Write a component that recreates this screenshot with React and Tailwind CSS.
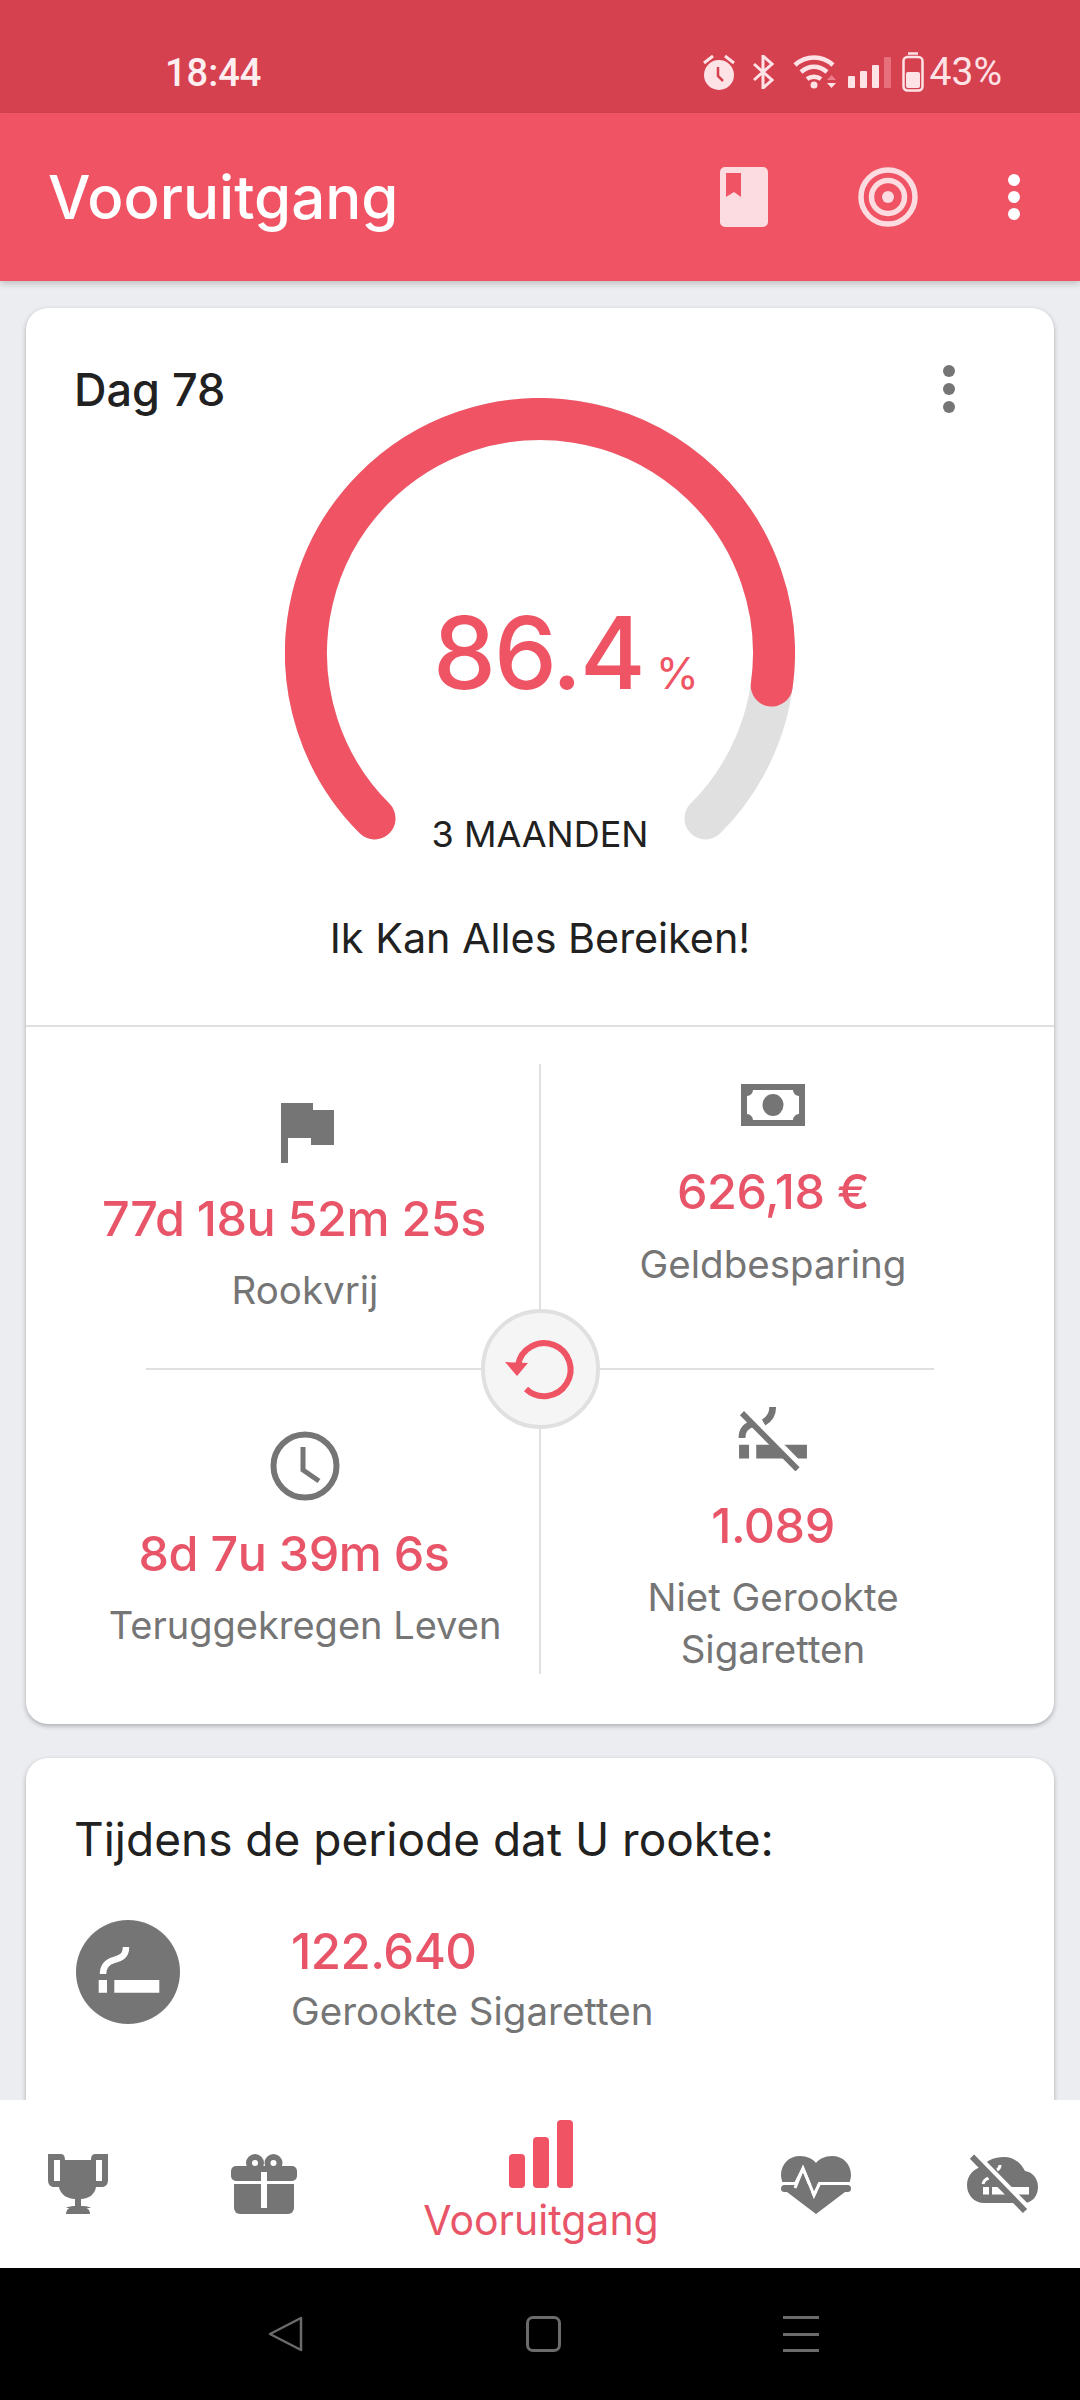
import React from "react";

const polar = (deg, r = 234, cx = 255, cy = 255) => {
  const a = (deg * Math.PI) / 180;
  return [cx + r * Math.sin(a), cy - r * Math.cos(a)];
};
const arc = (from, to) => {
  const [x1, y1] = polar(from);
  const [x2, y2] = polar(to);
  return `M${x1} ${y1}A234 234 0 ${to - from > 180 ? 1 : 0} 1 ${x2} ${y2}`;
};

const Gauge = () => (
  <svg width="510" height="460" viewBox="0 0 510 460" fill="none" strokeWidth="42" strokeLinecap="round">
    <path d={arc(-135, 135)} stroke="#e0e0e0" />
    <path d={arc(-135, 98)} stroke="#f05464" />
  </svg>
);

const Dots = ({ color, gap }) => (
  <div className={`flex flex-col ${gap}`}>
    <span className={`w-[12px] h-[12px] rounded-full ${color}`} />
    <span className={`w-[12px] h-[12px] rounded-full ${color}`} />
    <span className={`w-[12px] h-[12px] rounded-full ${color}`} />
  </div>
);

const StatusBar = () => (
  <div className="h-[113px] bg-[#d64150] flex items-start text-[#fde2e6] shrink-0 relative font-['Roboto',sans-serif]">
    <span className="ml-[165px] mt-[51px] text-[38px] leading-[44px] font-medium text-[#fdeef0]">18:44</span>
    <div className="ml-auto mr-[78px] mt-[50px] flex items-center h-[44px]">
      <svg width="32" height="36" viewBox="0 0 32 36" fill="#fde2e6">
        <path d="M1 9l9-7M31 9l-9-7" stroke="#fde2e6" strokeWidth="3" />
        <circle cx="16" cy="21" r="15" />
        <path d="M15 13v9l5 5" fill="none" stroke="#d64150" strokeWidth="2.500" />
      </svg>
      <svg width="21" height="34" viewBox="0 0 21 34" className="ml-[18px]" fill="none" stroke="#fde2e6" strokeWidth="3">
        <path d="M1 9l18 16-9 8V1l9 8L1 25" />
      </svg>
      <svg width="46" height="34" viewBox="0 0 46 34" className="ml-[19px]" fill="none" stroke="#fde2e6" strokeWidth="4.500">
        <path d="M2 10C13 0 29 0 40 10" />
        <path d="M8 17C16 10 26 10 34 17" />
        <path d="M14 24C18 21 24 21 28 24" />
        <circle cx="21" cy="30" r="3.500" fill="#fde2e6" stroke="none" />
        <path d="M34 25h9l-4.500-5z" fill="#ec7d89" stroke="none" />
        <path d="M34 28h9l-4.500 5z" fill="#fde2e6" stroke="none" />
      </svg>
      <svg width="44" height="31" viewBox="0 0 44 31" className="ml-[9px]" fill="#fde2e6">
        <rect x="0" y="19" width="7" height="12" rx="1" />
        <rect x="12" y="14" width="7" height="17" rx="1" />
        <rect x="24" y="8" width="7" height="23" rx="1" />
        <rect x="36" y="0" width="7" height="31" rx="1" fill="#e8707d" />
      </svg>
      <svg width="22" height="40" viewBox="0 0 22 40" className="ml-[10px]" fill="none" stroke="#fde2e6" strokeWidth="2.500">
        <path d="M6 1.500h10" />
        <rect x="1.500" y="5" width="19" height="33.500" rx="4" />
        <rect x="4" y="20" width="14" height="16" rx="2" fill="#fde2e6" stroke="none" />
      </svg>
      <span className="ml-[6px] text-[39px] leading-[44px]">43%</span>
    </div>
  </div>
);

const AppBar = () => (
  <div className="relative z-10 h-[168px] bg-[#f05464] flex items-center shrink-0 shadow-[0_3px_6px_rgba(0,0,0,0.18)]">
    <h1 className="ml-[48px] text-[60px] leading-[72px] text-white font-medium">Vooruitgang</h1>
    <svg width="48" height="60" viewBox="0 0 48 60" className="ml-auto">
      <path
        fillRule="evenodd"
        fill="#fcdce0"
        d="M5 0h38a5 5 0 0 1 5 5v50a5 5 0 0 1-5 5H5a5 5 0 0 1-5-5V5a5 5 0 0 1 5-5zM6 6v24l8-5 7 5V6z"
      />
    </svg>
    <svg width="60" height="60" viewBox="0 0 60 60" className="ml-[90px]" fill="none" stroke="#fcdce0" strokeWidth="5.500">
      <circle cx="30" cy="30" r="27" />
      <circle cx="30" cy="30" r="16.500" />
      <circle cx="30" cy="30" r="6" fill="#fcdce0" stroke="none" />
    </svg>
    <div className="ml-[90px] mr-[60px]">
      <Dots color="bg-white" gap="gap-[5px]" />
    </div>
  </div>
);

const GRAY = "#757575";

const Flag = () => (
  <svg width="53" height="60" viewBox="0 0 53 60" fill={GRAY} className="ml-[5px]">
    <path d="M0 0h32v7h21v35H30v-7H7v25H0z" />
  </svg>
);

const Money = () => (
  <svg width="64" height="42" viewBox="0 0 64 42">
    <path
      fillRule="evenodd"
      fill={GRAY}
      d="M0 0h64v42H0zM12 6c0 3-3 6-6 6v18c3 0 6 3 6 6h40c0-3 3-6 6-6V12c-3 0-6-3-6-6z"
    />
    <ellipse cx="32" cy="21" rx="10.500" ry="11" fill={GRAY} />
  </svg>
);

const Clock = () => (
  <svg width="70" height="70" viewBox="0 0 70 70" fill="none" stroke={GRAY} strokeWidth="6">
    <circle cx="35" cy="35" r="31.500" />
    <path d="M33 16v23l16 11" strokeWidth="5" />
  </svg>
);

// Crossed-out cigarette with a curl of smoke; the white edge runs along the slash's upper side
const NoSmoking = () => (
  <svg width="70" height="66" viewBox="0 0 70 66" fill="none">
    <path d="M34.700 0c0 8-4 13-9.400 16" stroke={GRAY} strokeWidth="7" />
    <path d="M15 17c-8 2-12 7-12 15" stroke={GRAY} strokeWidth="7" />
    <path d="M0 39h10.300v14H0zM17.700 39H70v14H17.700z" fill={GRAY} />
    <path d="M6 3.300l57.300 58" stroke="white" strokeWidth="8" />
    <path d="M3 6.300l57.300 58" stroke={GRAY} strokeWidth="6" />
  </svg>
);

const Cigarette = () => (
  <svg width="104" height="104" viewBox="0 0 104 104" fill="white">
    <path d="M22.700 60H31v12.700h-8.300zM38.300 60h45v12.700h-45z" />
    <path d="M50 27C50 36 45 38 38 40 31 42 27 46 27 54" fill="none" stroke="white" strokeWidth="6.500" />
  </svg>
);

const Trophy = () => (
  <svg width="60" height="60" viewBox="0 0 60 60" className="ml-[48px] mt-[54px]" fill={GRAY}>
    <path
      fillRule="evenodd"
      d="M0 0h13c3 0 4 3 4 6h26c0-3 1-6 4-6h13v26c0 5-3 7-6 7h-6c-1 7-7 12-15 12v7c6 0 9 1 10 2v0H18c1-1 4-2 9-2v-7c-8 0-15-5-16-12H6c-3 0-6-2-6-7zM6 6v21h6V6zM48 6v21h6V6z"
    />
    <path d="M18 60c0-5 4-8 12-8s12 3 12 8z" />
  </svg>
);

const Gift = () => (
  <svg width="66" height="60" viewBox="0 0 66 60" className="ml-[123px] mt-[54px]" fill={GRAY}>
    <circle cx="24" cy="9" r="9" />
    <circle cx="42.500" cy="9" r="9" />
    <circle cx="24" cy="9" r="3" fill="white" />
    <circle cx="42.500" cy="9" r="3" fill="white" />
    <rect x="0" y="12" width="66" height="15" rx="5" />
    <path d="M3 30h60v24a6 6 0 0 1-6 6H9a6 6 0 0 1-6-6z" />
    <rect x="30" y="18" width="6" height="36" fill="white" />
  </svg>
);

const Pulse = () => (
  <svg width="70" height="60" viewBox="0 0 70 60" className="ml-[124px] mt-[54px]">
    <path
      fill={GRAY}
      d="M19 2c7 0 13 3 16 7 3-4 9-7 16-7 11 0 19 8 19 19 0 3-1 6-2 9l-4 8-29 22L6 38l-4-8C1 27 0 24 0 21 0 10 8 2 19 2z"
    />
    <path d="M0 29.500h14.500L22 14.500 33 41l5.500-11.500H70" fill="none" stroke="white" strokeWidth="3" />
    <rect x="0" y="31" width="70" height="7" rx="3.500" fill={GRAY} />
    <path d="M14 34l8-19.500 11 26.500 5.500-11.500" fill="none" stroke="white" strokeWidth="3" />
  </svg>
);

const CloudOff = () => (
  <svg width="71" height="60" viewBox="0 0 71 60" className="ml-[116px] mt-[54px]">
    <path
      fill={GRAY}
      d="M37 3C47 3 54 9 58 17 66 18 71 25 71 33 71 42 65 49 57 49H17C7 49 0 41 0 31 0 22 6 15 14 13 19 7 27 3 37 3z"
    />
    <path d="M16 33h6v7.500h-6zM25 33h37v7.500H25z" fill="white" />
    <path d="M21.700 24c-3 1-5 3-5.700 6M33 11c0 2-1 4-3 5" fill="none" stroke="white" strokeWidth="3" />
    <path d="M8 0l53 54" stroke="white" strokeWidth="6" />
    <path d="M5 2.700l53 54.300" stroke={GRAY} strokeWidth="6" />
  </svg>
);

const valueClass = "text-[48.500px] leading-[56px] text-[#e85568] font-medium whitespace-nowrap tracking-[-0.5px]";
const labelClass = "text-[38.500px] leading-[52px] text-[#757575] text-center whitespace-nowrap";

const Stats = () => (
  <div className="relative px-[44px] pt-[38px]">
    <div className="grid grid-cols-[470px_470px] grid-rows-[303px_307px]">
      <div className="flex flex-col items-center pt-[38px]">
        <Flag />
        <div className={`${valueClass} mt-[28px] pr-[22px]`}>77d 18u 52m 25s</div>
        <div className={`${labelClass} mt-[17px]`}>Rookvrij</div>
      </div>
      <div className="flex flex-col items-center pt-[19px] pr-[4px]">
        <Money />
        <div className={`${valueClass} mt-[38px]`}>626,18 €</div>
        <div className={`${labelClass} mt-[18px]`}>Geldbesparing</div>
      </div>
      <div className="flex flex-col items-center pt-[63px]">
        <Clock />
        <div className={`${valueClass} mt-[25px] pr-[22px]`}>8d 7u 39m 6s</div>
        <div className="text-[38px] leading-[52px] text-[#757575] text-center whitespace-nowrap mt-[17px]">Teruggekregen Leven</div>
      </div>
      <div className="flex flex-col items-center pt-[39px] pr-[4px]">
        <NoSmoking />
        <div className={`${valueClass} mt-[27px]`}>1.089</div>
        <div className={`${labelClass} mt-[17px]`}>
          Niet Gerookte
          <br />
          Sigaretten
        </div>
      </div>
    </div>
    {/* Cross lines and the reset button sit over the four stat cells */}
    <div className="absolute left-[513px] top-[37px] w-[2px] h-[610px] bg-[#e0e0e0]" />
    <div className="absolute left-[120px] top-[341px] w-[788px] h-[2px] bg-[#e0e0e0]" />
    <div className="absolute left-[455px] top-[282px] w-[119px] h-[120px] rounded-full bg-[#f5f5f5] border-[4px] border-[#e0e0e0] flex items-center justify-center">
      <svg width="72" height="64" viewBox="0 0 72 64" fill="none">
        <path d="M13 28A26.500 26.500 0 1 1 21 52" stroke="#ef5465" strokeWidth="6" />
        <path d="M0 25l23 1-11 13z" fill="#ef5465" />
      </svg>
    </div>
  </div>
);

const BottomNav = () => (
  <nav className="relative z-10 h-[168px] bg-white shrink-0 flex items-start">
    <Trophy />
    <Gift />
    <div className="ml-[126px] w-[236px] -mr-[2px] flex flex-col items-center pt-[20px]">
      <svg width="64" height="68" viewBox="0 0 64 68" fill="#f05464">
        <rect x="0" y="34" width="16" height="34" rx="4" />
        <rect x="24" y="17" width="16" height="51" rx="4" />
        <rect x="48" y="0" width="16" height="68" rx="4" />
      </svg>
      <span className="mt-[6px] text-[41px] leading-[52px] text-[#e85568] whitespace-nowrap">Vooruitgang</span>
    </div>
    <Pulse />
    <CloudOff />
  </nav>
);

const SystemNav = () => (
  <div className="h-[132px] bg-black shrink-0 flex items-start pt-[48px]">
    <svg width="36" height="36" viewBox="0 0 36 36" className="ml-[268px]" fill="none" stroke="#6b6b6b" strokeWidth="2.500" strokeLinejoin="round">
      <path d="M33 2v32L2 18z" />
    </svg>
    <div className="ml-[222px] w-[35px] h-[36px] rounded-[7px] border-[3px] border-[#6b6b6b]" />
    <div className="ml-[222px] w-[36px] h-[36px] flex flex-col justify-between">
      <span className="h-[3px] bg-[#6b6b6b]" />
      <span className="h-[3px] bg-[#6b6b6b]" />
      <span className="h-[3px] bg-[#6b6b6b]" />
    </div>
  </div>
);

export default function App() {
  return (
    <div className="w-[1080px] h-[2400px] flex flex-col overflow-hidden bg-[#ebedf0] font-['Inter',sans-serif]">
      <StatusBar />
      <AppBar />
      <main className="flex-1 min-h-0 overflow-hidden px-[26px] pt-[27px] flex flex-col gap-[34px]">
        <section className="shrink-0 h-[1416px] bg-white rounded-[22px] shadow-[0_2px_5px_rgba(0,0,0,0.28)]">
          <div className="h-[90px] px-[48px] flex items-start justify-between">
            <span className="mt-[55px] text-[45px] leading-[54px] font-medium text-[#212121]">Dag 78</span>
            <div className="mt-[57px] mr-[51px]">
              <Dots color="bg-[#757575]" gap="gap-[6px]" />
            </div>
          </div>
          <div className="relative w-[510px] h-[460px] mx-auto">
            <Gauge />
            <div className="absolute left-0 right-0 top-[200px] flex items-baseline justify-center text-[#ef5465] pl-[52px]">
              <span className="text-[100px] leading-[110px] font-medium tracking-[-2px]">86.4</span>
              <span className="ml-[12px] text-[44px] leading-[50px]">%</span>
            </div>
            <div className="absolute left-0 right-0 top-[414px] text-center text-[36px] leading-[44px] text-[#212121]">
              3 MAANDEN
            </div>
          </div>
          <p className="mt-[54px] text-center text-[41.300px] leading-[52px] text-[#212121]">Ik Kan Alles Bereiken!</p>
          <div className="mt-[61px] h-[2px] bg-[#e0e0e0]" />
          <Stats />
        </section>
        <section className="shrink-0 h-[500px] bg-white rounded-[22px] shadow-[0_2px_5px_rgba(0,0,0,0.28)] px-[48px]">
          <h2 className="pt-[54px] text-[46px] leading-[54px] text-[#212121] whitespace-nowrap">Tijdens de periode dat U rookte:</h2>
          <div className="mt-[54px] flex items-start">
            <div className="w-[104px] h-[104px] rounded-full bg-[#757575] flex items-center justify-center ml-[2px]">
              <Cigarette />
            </div>
            <div className="ml-[111px] mt-[4px] flex flex-col">
              <span className="text-[49px] leading-[56px] text-[#e85568] font-medium tracking-[-0.5px]">122.640</span>
              <span className="mt-[5px] text-[38.500px] leading-[52px] text-[#757575]">Gerookte Sigaretten</span>
            </div>
          </div>
        </section>
      </main>
      <BottomNav />
      <SystemNav />
    </div>
  );
}
